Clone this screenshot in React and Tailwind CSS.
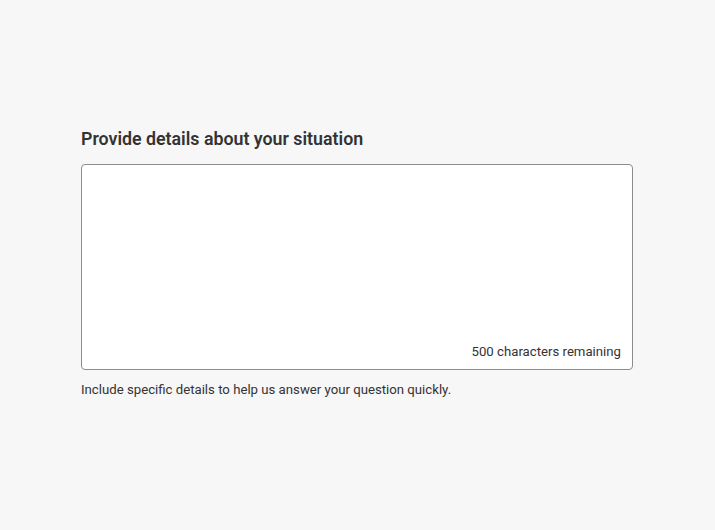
import React, { useState } from "react";

const App = () => {
  const [text, setText] = useState("");
  const max = 500;

  return (
    <div className="min-h-[530px] w-full bg-[#f7f7f7] font-['Roboto',sans-serif] text-[#2e2e2e]">
      <div className="pl-[81px] pt-[127px] w-[633px]">
        {/* Label */}
        <label htmlFor="details" className="block text-[17.8px] leading-6 font-semibold text-[#333]">
          Provide details about your situation
        </label>

        {/* Textarea box */}
        <div className="mt-[13px] h-[206px] rounded-[4px] border border-[#8c8c8c] bg-white flex flex-col">
          <textarea
            id="details"
            value={text}
            maxLength={max}
            onChange={(e) => setText(e.target.value)}
            className="flex-1 resize-none bg-transparent px-3 pt-2 text-sm outline-none"
          />
          <p className="px-[11px] pb-[7px] text-right text-[13.2px] leading-5 text-[#333]">
            {max - text.length} characters remaining
          </p>
        </div>

        {/* Help text */}
        <p className="mt-[10px] text-[13.2px] leading-5 text-[#333]">
          Include specific details to help us answer your question quickly.
        </p>
      </div>
    </div>
  );
};

export default App;
